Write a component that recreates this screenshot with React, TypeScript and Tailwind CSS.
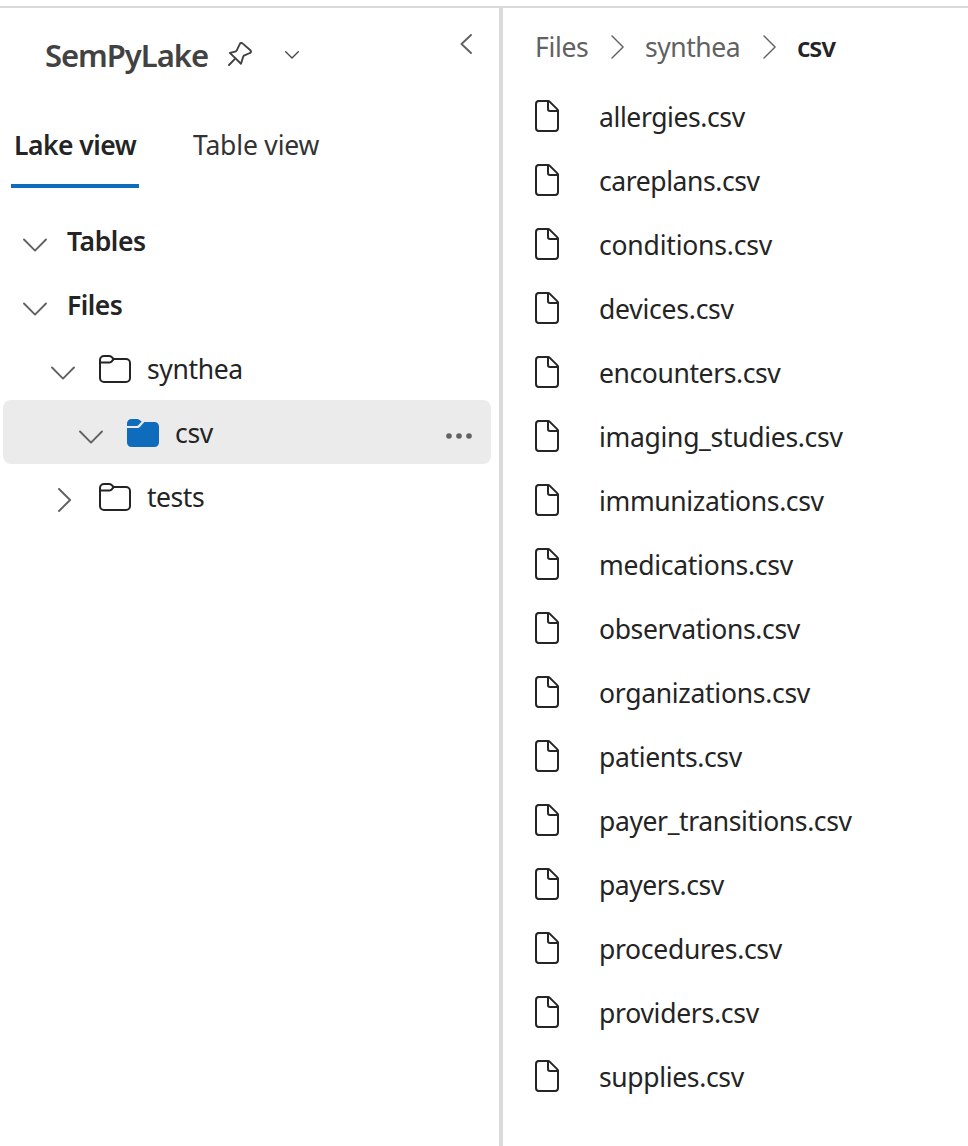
import React from "react";

const files: [string, string][] = [
  ["allergies.csv", "tracking-[-0.4px]"],
  ["careplans.csv", "tracking-[-0.41px]"],
  ["conditions.csv", "tracking-[-0.2px]"],
  ["devices.csv", "tracking-[-0.23px]"],
  ["encounters.csv", "tracking-[-0.4px]"],
  ["imaging_studies.csv", "tracking-[-0.31px]"],
  ["immunizations.csv", "tracking-[-0.36px]"],
  ["medications.csv", "tracking-[-0.27px]"],
  ["observations.csv", "tracking-[-0.37px]"],
  ["organizations.csv", "tracking-[-0.29px]"],
  ["patients.csv", "tracking-[-0.36px]"],
  ["payer_transitions.csv", "tracking-[-0.38px]"],
  ["payers.csv", "tracking-[-0.45px]"],
  ["procedures.csv", "tracking-[-0.3px]"],
  ["providers.csv", "tracking-[-0.27px]"],
  ["supplies.csv", "tracking-[-0.35px]"],
];

function FileIcon() {
  return (
    <svg className="h-8 w-6 shrink-0" viewBox="0 0 24 32" fill="none" stroke="#242424" strokeWidth="2" strokeLinejoin="round">
      <path d="M4 1h9.200a2 2 0 0 1 1.400.6l7.800 7.800a2 2 0 0 1 .6 1.400V28a3 3 0 0 1-3 3H4a3 3 0 0 1-3-3V4a3 3 0 0 1 3-3Z" />
      <path d="M13 1v8a2 2 0 0 0 2 2h8" />
    </svg>
  );
}

function FolderIcon() {
  return (
    <svg className="h-7 w-8 shrink-0" viewBox="0 0 32 28" fill="none" stroke="#242424" strokeWidth="2" strokeLinejoin="round">
      <path d="M1 5a4 4 0 0 1 4-4h5.300a3 3 0 0 1 2 .8L14.700 4H27a4 4 0 0 1 4 4v15a4 4 0 0 1-4 4H5a4 4 0 0 1-4-4V5Z" />
      <path d="M1 7.600h9.300a3 3 0 0 0 2-.8L14.700 4" />
    </svg>
  );
}

function FolderFilledIcon() {
  return (
    <svg className="h-7 w-8 shrink-0" viewBox="0 0 32 28" fill="#0f6cbd">
      <path d="M0 7V4.500A4.500 4.500 0 0 1 4.500 0h5.700c.9 0 1.700.3 2.400.9L14.700 2.600 11.300 6.300a2 2 0 0 1-1.500.7H0Z" />
      <path d="M0 9h10c1.200 0 2.300-.5 3.100-1.300L17.300 3H27.500A4.500 4.500 0 0 1 32 7.500v16a4.500 4.500 0 0 1-4.500 4.500h-23A4.500 4.500 0 0 1 0 23.500V9Z" />
    </svg>
  );
}

function ChevronDown() {
  return (
    <svg className="mt-2.5 h-3.5 w-6 shrink-0" viewBox="0 0 24 14" fill="none" stroke="#616161" strokeWidth="1.900" strokeLinecap="round" strokeLinejoin="round">
      <path d="M1 1.500 12 12.600 23 1.500" />
    </svg>
  );
}

function ChevronRight({ className, width }: { className: string; width: number }) {
  return (
    <svg className={className} viewBox="0 0 14 24" fill="none" stroke="#616161" strokeWidth={width} strokeLinecap="round" strokeLinejoin="round">
      <path d="M1 1 12.100 12 1 23" />
    </svg>
  );
}

export default function App() {
  return (
    <div className="flex h-[1146px] w-[968px] flex-col overflow-hidden bg-white pt-1.5 font-['Noto_Sans',sans-serif] text-[26.5px] leading-8 text-[#242424]">
      <div className="h-0.5 shrink-0 bg-[#dadada]" />
      <div className="flex flex-1">
        <aside className="flex w-[499px] shrink-0 flex-col">
          <header className="flex h-[94px] items-center pl-[45px] text-[#424242]">
            <h1 className="w-[183px] text-[31px] font-[560] tracking-[-1.04px]">SemPyLake</h1>
            <svg className="-mt-0.5 h-6 w-6" viewBox="0 0 24 24" fill="none" stroke="#424242" strokeWidth="1.900" strokeLinecap="round" strokeLinejoin="round">
              <path d="M11.600 2.300c.6-1.400 2.100-1.700 3.200-.7l7.600 6.600c1 .9.7 2.300-.5 2.800l-5.400 2.400c-.7.3-1.200.8-1.400 1.500l-2.100 6.900L1.900 10.900l5.300-1.300c.8-.2 1.400-.7 1.700-1.400l2.700-5.900Z" />
              <path d="M7.200 16.700 1 23" />
            </svg>
            <svg className="ml-[33px] h-2 w-3.5" viewBox="0 0 14 8" fill="none" stroke="#424242" strokeWidth="1.300" strokeLinecap="round" strokeLinejoin="round">
              <path d="M.7.7 7 7 13.300.7" />
            </svg>
            <svg className="mb-[22px] ml-[161px] h-5 w-3" viewBox="0 0 12 20" fill="none" stroke="#616161" strokeWidth="1.900" strokeLinecap="round" strokeLinejoin="round">
              <path d="M11 1 1.500 10l9.500 9" />
            </svg>
          </header>
          <nav className="flex h-[86px] pl-[11px] text-[#333]">
            <div className="flex w-32 flex-col border-b-4 border-[#0f6cbd] pt-[27px]">
              <span className="whitespace-nowrap pl-[3px] font-[570] tracking-[-0.52px] text-[#242424]">Lake view</span>
            </div>
            <span className="ml-[54px] whitespace-nowrap pt-[27px] tracking-[-0.18px]">Table view</span>
          </nav>
          <div className="mt-5 flex flex-col pl-[3px] pr-2">
            <div className="flex h-16 items-center pl-5">
              <ChevronDown />
              <span className="ml-5 mt-0.5 font-[570] tracking-[-0.4px]">Tables</span>
            </div>
            <div className="flex h-16 items-center pl-5">
              <ChevronDown />
              <span className="ml-5 mt-0.5 font-[570] tracking-[-0.5px]">Files</span>
            </div>
            <div className="flex h-16 items-center pl-12">
              <ChevronDown />
              <span className="ml-6 mt-0.5"><FolderIcon /></span>
              <span className="ml-4 mt-0.5 tracking-[-0.38px]">synthea</span>
            </div>
            <div className="flex h-16 items-center rounded-lg bg-[#ebebeb] pl-[76px]">
              <ChevronDown />
              <span className="ml-6 mt-0.5"><FolderFilledIcon /></span>
              <span className="ml-4 mt-0.5 tracking-[-0.3px]">csv</span>
              <svg className="ml-auto mr-[19px] mt-2 h-1.5 w-[26px]" viewBox="0 0 26 6" fill="#616161">
                <circle cx="3" cy="3" r="2.800" />
                <circle cx="13" cy="3" r="2.800" />
                <circle cx="23" cy="3" r="2.800" />
              </svg>
            </div>
            <div className="flex h-16 items-center pl-[55px]">
              <ChevronRight className="mt-2 h-6 w-3.5" width={1.9} />
              <span className="ml-[27px] mt-0.5"><FolderIcon /></span>
              <span className="ml-4 mt-0.5 tracking-[-0.45px]">tests</span>
            </div>
          </div>
        </aside>
        <div className="w-1 shrink-0 bg-[#dadada]" />
        <main className="flex-1 pl-8">
          <div className="flex h-[76px] items-center pt-0.5 text-[#616161]">
            <span className="w-[76px] tracking-[-0.34px]">Files</span>
            <ChevronRight className="h-6 w-3.5" width={1.4} />
            <span className="ml-5 w-[118px] tracking-[-0.45px]">synthea</span>
            <ChevronRight className="h-6 w-3.5" width={1.4} />
            <span className="ml-5 font-semibold tracking-[-0.95px] text-[#242424]">csv</span>
          </div>
          <ul>
            {files.map(([name, tracking]) => (
              <li key={name} className="flex h-16 items-center">
                <FileIcon />
                <span className={`ml-10 mt-0.5 ${tracking}`}>{name}</span>
              </li>
            ))}
          </ul>
        </main>
      </div>
    </div>
  );
}
